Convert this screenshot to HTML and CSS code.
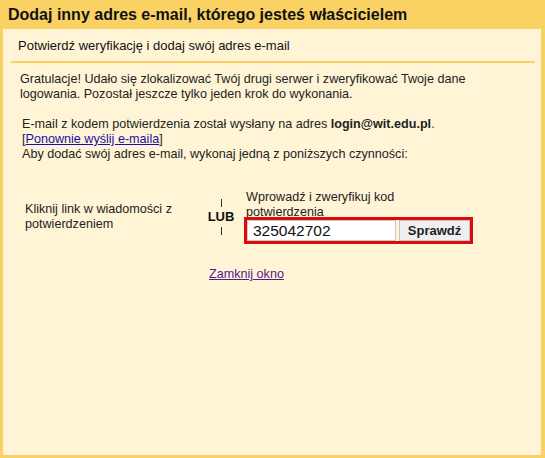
FILE: index.html
```html
<!doctype html>
<html>
	<head>
		<meta charset="UTF-8">
		<title>Dodaj inny adres e-mail</title>
		<link rel="stylesheet" href="styles.css">
	</head>
	<body>
		<div class="title">Dodaj inny adres e-mail, którego jesteś właścicielem</div>
		<div class="panel">
			<div class="subtitle">Potwierdź weryfikację i dodaj swój adres e-mail</div>
			<div class="content">
				<p class="info">Gratulacje! Udało się zlokalizować Twój drugi serwer i zweryfikować Twoje dane logowania. Pozostał jeszcze tylko jeden krok do wykonania.</p>
				<p class="sent">
					E-mail z kodem potwierdzenia został wysłany na adres <b>login@wit.edu.pl</b>.<br>
					[<a class="link" href="#">Ponownie wyślij e-maila</a>]<br>
					Aby dodać swój adres e-mail, wykonaj jedną z poniższych czynności:
				</p>
				<div class="choice">
					<div class="opt1">Kliknij link w wiadomości z potwierdzeniem</div>
					<div class="or">
						<div class="bar"></div>
						<div class="lub">LUB</div>
						<div class="bar"></div>
					</div>
					<div class="opt2">
						<div class="label">Wprowadź i zweryfikuj kod<br>potwierdzenia</div>
						<div class="codebox">
							<input class="code" type="text" value="325042702">
							<button class="check">Sprawdź</button>
						</div>
					</div>
				</div>
				<div class="close"><a class="closelink" href="#">Zamknij okno</a></div>
			</div>
		</div>
	</body>
</html>
```

FILE: styles.css
```css
html,body{
	margin:0;
	height:100%
}
body{
	background-color:#fad264;
	font-family:"Liberation Sans",Arial,sans-serif;
	font-size:12.6px;
	color:#222;
	display:flex;
	flex-direction:column
}
.title{
	font-size:16px;
	font-weight:bold;
	color:#111;
	padding:6px 8px 0 8px;
	height:23px
}
.panel{
	flex:1;
	background-color:#fff5d6;
	margin:0 4px 3px 3px
}
.subtitle{
	font-size:13px;
	margin:0 6px 0 8px;
	padding:9px 0 8px 7px;
	border-bottom:2px solid #fad264;
	color:#111
}
.content{padding:0 17px}
.info{margin:9px 0 0 0;line-height:15px;width:490px}
.sent{margin:15px 0 0 2px;line-height:15px}
.link{color:#1a0dab}
.choice{
	display:flex;
	align-items:center;
	margin-top:28px
}
.opt1{width:176px;padding-left:5px;line-height:15px}
.or{
	width:40px;
	display:flex;
	flex-direction:column;
	align-items:center;
	gap:3px
}
.bar{width:1px;height:8px;background:#333}
.lub{font-weight:bold;font-size:13px;line-height:14px;color:#111}
.opt2{padding-left:3px}
.label{line-height:15px;height:27px;padding-left:2px}
.codebox{
	position:relative;
	display:flex;
	border:3px solid #dd0a0a;
	width:223px;
	height:21px;
	gap:3px
}
.code{
	width:149px;
	margin:0;
	border:1px solid #c8c8c8;
	padding:0 5px;
	font-family:"Liberation Sans",Arial,sans-serif;
	font-size:15.5px;
	color:#111;
	background:#fff;
	box-sizing:border-box
}
.check{
	flex:1;
	margin:0;
	border:1px solid #c4c4c4;
	background:#efefef;
	font-family:"Liberation Sans",Arial,sans-serif;
	font-size:13px;
	font-weight:bold;
	color:#222;
	padding:0
}
.close{margin:23px 0 0 189px;line-height:15px}
.closelink{color:#551a8b}
```
